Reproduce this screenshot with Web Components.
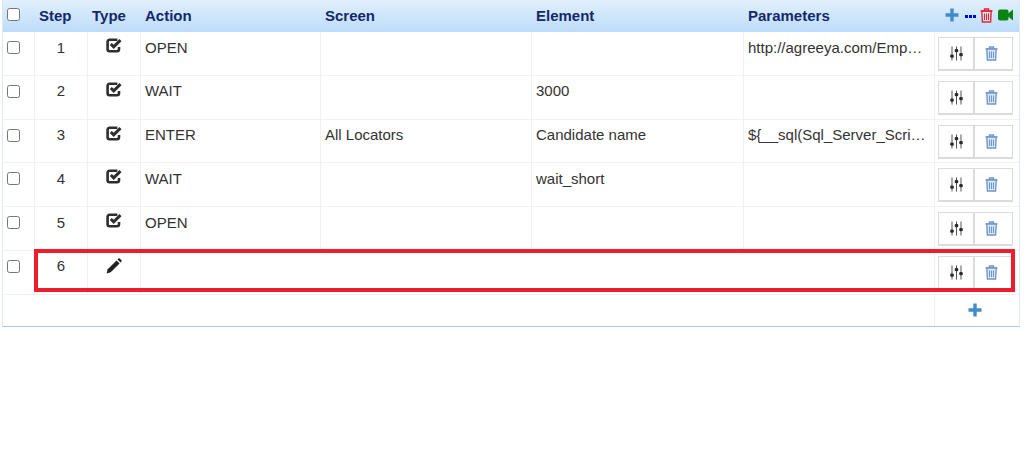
<!DOCTYPE html>
<html>
<head>
<meta charset="utf-8">
<title>Steps</title>
<style>
    html, body { margin: 0; background: #fff; }
    body { font-family: "Liberation Sans", Arial, sans-serif; }
</style>
</head>
<body>
<step-table>
    <step-row step="1" type="check" action="OPEN" params="http://agreeya.com/Emp…"></step-row>
    <step-row step="2" type="check" action="WAIT" element="3000"></step-row>
    <step-row step="3" type="check" action="ENTER" screen="All Locators" element="Candidate name" params="${__sql(Sql_Server_Scri…"></step-row>
    <step-row step="4" type="check" action="WAIT" element="wait_short"></step-row>
    <step-row step="5" type="check" action="OPEN"></step-row>
    <step-row step="6" type="edit"></step-row>
</step-table>
<script>
const COLS = '31px 53px 53px 180px 211px 212px 191px 85px';

const TRASH = (color, tint) => `<svg width="13" height="15" viewBox="0 0 13 15" fill="none" stroke="${color}" stroke-width="1.4">
    <path d="M0.5 3h12M4.5 3V1h4v2" />
    <path d="M1.8 3l.6 11h8.2l.6-11z" fill="${tint}"/>
    <path d="M4.5 5.5v6.5M6.5 5.5v6.5M8.5 5.5v6.5" stroke-width="1.1"/>
</svg>`;

const SLIDERS = `<svg width="13" height="15" viewBox="0 0 13 15" fill="#2b2b2b" stroke="#555">
    <path d="M2 0.5v14M6.5 0.5v14M11 0.5v14" stroke-width="1"/>
    <rect x="0.2" y="8.5" width="3.6" height="3.2" rx="1.2" stroke="none"/>
    <rect x="4.7" y="3" width="3.6" height="3.2" rx="1.2" stroke="none"/>
    <rect x="9.2" y="7" width="3.6" height="3.2" rx="1.2" stroke="none"/>
</svg>`;

const CHECK = `<svg width="16" height="15" viewBox="0 0 16 15" fill="none" stroke="#2e2e2e" stroke-width="2.6">
    <path d="M13 9v2.2a2 2 0 0 1-2 2H3.6a2 2 0 0 1-2-2V3.8a2 2 0 0 1 2-2h7.8"/>
    <path d="M4.8 6l2.9 2.9 6.8-6.8" stroke-width="2.9"/>
</svg>`;

const PENCIL = `<svg width="16" height="16" viewBox="0 0 16 16" fill="#222">
    <path d="M0.6 15.4l1.1-4.1L10.6 2.4l3 3-8.9 8.9z"/>
    <path d="M11.5 1.5l.9-.9a1 1 0 0 1 1.4 0l1.6 1.6a1 1 0 0 1 0 1.4l-.9.9z"/>
</svg>`;

const PLUS = (size) => `<svg width="${size}" height="${size}" viewBox="0 0 14 14" fill="#428bca">
    <path d="M5.3 0.5h3.4v4.8h4.8v3.4H8.7v4.8H5.3V8.7H0.5V5.3h4.8z"/>
</svg>`;

class StepTable extends HTMLElement {
    constructor() {
        super();
        const shadow = this.attachShadow({mode: 'open'});
        shadow.innerHTML = `
            <style>
                :host {
                    display: block;
                    position: relative;
                    box-sizing: border-box;
                    width: 1018px;
                    margin-left: 2px;
                    border-left: 1px solid #dfe8f1;
                    border-right: 1px solid #dfe8f1;
                    border-bottom: 1px solid #b3c7da;
                    font-size: 15px;
                    color: #333;
                }
                .head {
                    display: grid;
                    grid-template-columns: ${COLS};
                    box-sizing: border-box;
                    height: 32px;
                    padding-bottom: 2px;
                    align-items: center;
                    background: linear-gradient(#e2f0fd, #bcdcfa);
                    color: #14296b;
                    font-weight: bold;
                    font-size: 15px;
                }
                .head span { padding-left: 5px; }
                .box {
                    box-sizing: border-box;
                    width: 13px;
                    height: 13px;
                    margin: -2px 0 0 4px;
                    border: 1px solid #767676;
                    border-radius: 2.5px;
                    background: #fff;
                }
                .head .tools {
                    display: flex;
                    align-items: center;
                    justify-content: flex-end;
                    padding: 0 6px 0 0;
                }
                .tools svg { display: block; }
                .head .dots { display: flex; gap: 1px; margin: 2px 4px 0 6px; padding: 0; }
                .dots i { width: 3px; height: 3px; background: #0000ff; }
                .cam { margin-left: 5px; }
                .foot {
                    display: grid;
                    grid-template-columns: ${COLS};
                    height: 31px;
                }
                .foot div {
                    grid-column: 8;
                    border-left: 1px solid #f1f1f1;
                    display: flex;
                    justify-content: center;
                    align-items: center;
                    padding: 0 4px 1px 0;
                }
                .mark {
                    position: absolute;
                    left: 31px;
                    top: 249px;
                    width: 981px;
                    height: 43px;
                    box-sizing: border-box;
                    border: 4px solid #ed1c2e;
                    pointer-events: none;
                }
            </style>
            <div class="head">
                <div class="box"></div>
                <span>Step</span>
                <span>Type</span>
                <span>Action</span>
                <span>Screen</span>
                <span>Element</span>
                <span>Parameters</span>
                <span class="tools">
                    ${PLUS(14)}
                    <span class="dots"><i></i><i></i><i></i></span>
                    ${TRASH('#e8262d', 'none')}
                    <svg class="cam" width="15" height="12" viewBox="0 0 15 12" fill="#0a8412">
                        <rect x="0" y="0.5" width="10.5" height="11" rx="2"/>
                        <path d="M9.5 5L15 .5v11L9.5 7z"/>
                    </svg>
                </span>
            </div>
            <slot></slot>
            <div class="foot"><div>${PLUS(14)}</div></div>
            <div class="mark"></div>`;
    }
}

class StepRow extends HTMLElement {
    constructor() {
        super();
        const shadow = this.attachShadow({mode: 'open'});
        const open = this.getAttribute('type') === 'edit' ? 'plain' : '';
        shadow.innerHTML = `
            <style>
                :host {
                    display: grid;
                    grid-template-columns: ${COLS};
                    height: 43.8px;
                    box-sizing: border-box;
                    border-bottom: 1px solid #f1f1f1;
                }
                .c { border-left: 1px solid #f1f1f1; padding: 6.5px 0 0 4px; line-height: 17px; white-space: nowrap; overflow: hidden; }
                .k { overflow: hidden; }
                .plain { border-left-color: transparent; }
                .n { padding-left: 0; text-align: center; }
                .c.t { padding: 6px 1px 0 0; text-align: center; line-height: 0; }
                .c.t.e { padding: 7px 0 0 0; }
                .box {
                    box-sizing: border-box;
                    width: 13px;
                    height: 13px;
                    margin: 9px 0 0 4px;
                    border: 1px solid #767676;
                    border-radius: 2.5px;
                    background: #fff;
                }
                .c.btns { display: flex; padding: 5px 0 0 3px; overflow: visible; }
                .btn {
                    box-sizing: border-box;
                    width: 36px;
                    height: 34px;
                    display: flex;
                    align-items: center;
                    justify-content: center;
                    border: 1px solid #dbdbdb;
                    border-bottom-width: 2px;
                    background: #fff;
                }
                .btn + .btn { width: 39px; padding-right: 5px; }
            </style>
            <div class="k"><div class="box"></div></div>
            <div class="c n">${this.getAttribute('step') || ''}</div>
            <div class="c t ${open ? 'e' : ''}">${open ? PENCIL : CHECK}</div>
            <div class="c">${this.getAttribute('action') || ''}</div>
            <div class="c ${open}">${this.getAttribute('screen') || ''}</div>
            <div class="c ${open}">${this.getAttribute('element') || ''}</div>
            <div class="c ${open}">${this.getAttribute('params') || ''}</div>
            <div class="c btns">
                <div class="btn">${SLIDERS}</div>
                <div class="btn">${TRASH('#6f97cc', '#dbe7f5')}</div>
            </div>`;
    }
}

customElements.define('step-table', StepTable);
customElements.define('step-row', StepRow);
</script>
</body>
</html>
